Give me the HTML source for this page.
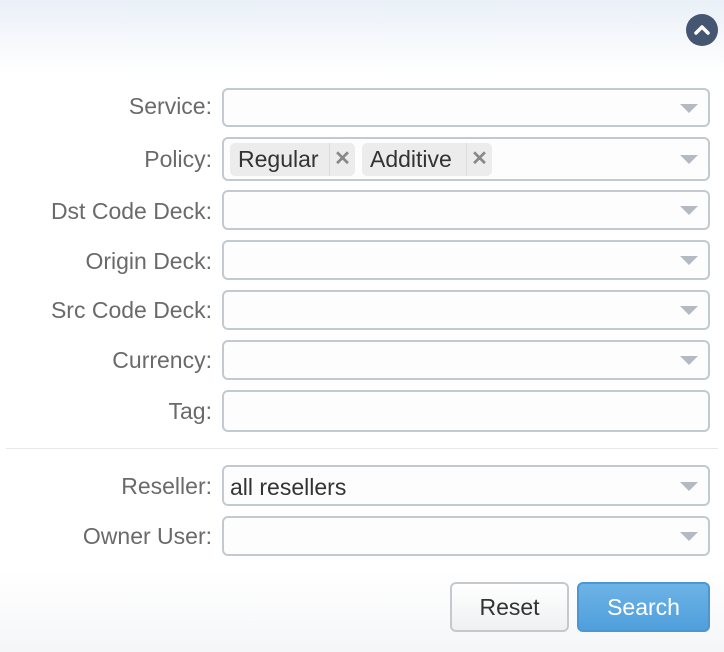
<!DOCTYPE html>
<html><head><style>
body{margin:0;width:724px;height:652px;overflow:hidden;font-family:"Liberation Sans",sans-serif;
background:linear-gradient(#eaf0f8 0,#fafbfd 55px,#fff 75px,#fff 570px,#f5f6f8 652px);position:relative}
.lbl{position:absolute;right:512px;font-size:23px;color:#6a6a6a;text-align:right;white-space:nowrap}
.f{position:absolute;left:222px;width:488px;border:2px solid #c3c9d1;border-radius:6px;background:#fdfdfd;box-sizing:border-box}
.arr{position:absolute;right:10px;top:50%;margin-top:-4px;width:0;height:0;border-left:9px solid transparent;border-right:9px solid transparent;border-top:9px solid #b3bac3}
.tag{position:absolute;top:4px;height:33px;background:#ececec;border-radius:5px;font-size:23px;color:#333;line-height:33px}
.tag span{padding:0 8px}
.tag b{position:absolute;right:0;top:0;width:25px;height:33px;border-left:1px solid #dcdcdc;color:#888;font-weight:bold;text-align:center;font-size:20px}
.btn{position:absolute;top:582px;height:50px;border-radius:6px;box-sizing:border-box;font-size:23px;text-align:center;line-height:46px}
</style></head><body>
<div style="position:absolute;left:686px;top:14px;width:32px;height:32px;border-radius:50%;background:#445672">
<svg width="32" height="32"><path d="M10 19 L16 13 L22 19" stroke="#fff" stroke-width="3.5" fill="none" stroke-linecap="round" stroke-linejoin="round"/></svg></div>

<div class="lbl" style="top:93px">Service:</div><div class="f" style="top:88px;height:39px"><div class="arr"></div></div>
<div class="lbl" style="top:146px">Policy:</div><div class="f" style="top:137px;height:44px">
<div class="tag" style="left:6px;width:125px"><span>Regular</span><b>✕</b></div>
<div class="tag" style="left:138px;width:130px"><span>Additive</span><b>✕</b></div><div class="arr"></div></div>
<div class="lbl" style="top:198px">Dst Code Deck:</div><div class="f" style="top:190px;height:40px"><div class="arr"></div></div>
<div class="lbl" style="top:248px">Origin Deck:</div><div class="f" style="top:240px;height:40px"><div class="arr"></div></div>
<div class="lbl" style="top:297px">Src Code Deck:</div><div class="f" style="top:290px;height:40px"><div class="arr"></div></div>
<div class="lbl" style="top:347px">Currency:</div><div class="f" style="top:340px;height:40px"><div class="arr"></div></div>
<div class="lbl" style="top:398px">Tag:</div><div class="f" style="top:390px;height:42px"></div>
<div style="position:absolute;left:6px;width:712px;top:448px;height:1px;background:#e6e8ec"></div>
<div class="lbl" style="top:473px">Reseller:</div><div class="f" style="top:465px;height:41px"><div style="position:absolute;left:6px;top:7px;font-size:23px;color:#333">all resellers</div><div class="arr"></div></div>
<div class="lbl" style="top:523px">Owner User:</div><div class="f" style="top:516px;height:40px"><div class="arr"></div></div>

<div class="btn" style="left:450px;width:119px;border:2px solid #c5c9ce;background:linear-gradient(#fff,#eff0f2);color:#333">Reset</div>
<div class="btn" style="left:577px;width:133px;border:2px solid #4a97d4;background:linear-gradient(#6db3e6,#4f9fdc);color:#fff">Search</div>
</body></html>
